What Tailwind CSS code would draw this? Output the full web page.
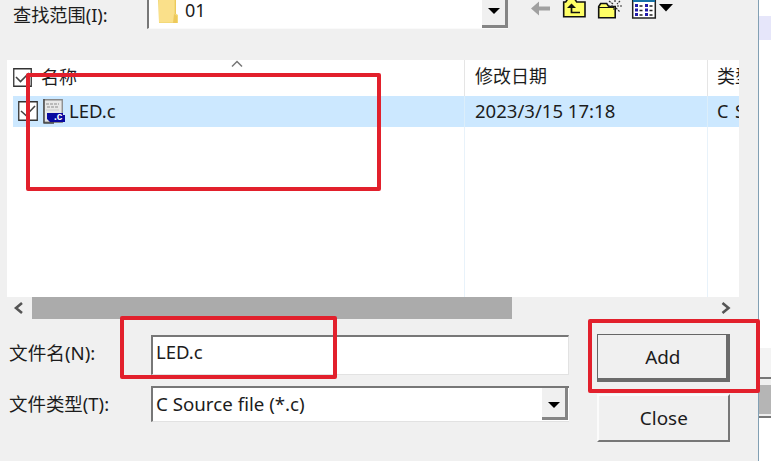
<!DOCTYPE html>
<html lang="zh-CN">
<head>
<meta charset="utf-8">
<title>Add Files</title>
<script src="https://cdn.jsdelivr.net/npm/@tailwindcss/browser@4"></script>
</head>
<body class="relative flex w-[771px] h-[461px] overflow-hidden bg-white text-[#1c1c1c] text-[18px] leading-[24px] whitespace-nowrap font-['Noto_Sans','Noto_Sans_CJK_SC',sans-serif]">
<main class="w-[759px] h-[461px] shrink-0 bg-[#f0f0f0] border-r border-[#82a0b4] flex flex-col">
  <!-- Look-in bar -->
  <header class="flex h-[60px] shrink-0 items-start">
    <div class="w-[147px] pl-[13px] pt-[3px]"><span class="inline-block origin-left scale-x-[1.01]">查找范围(I):</span></div>
    <div class="w-[361px] h-[29px] bg-white border-l-2 border-l-[#777] border-b border-b-[#fafafa] flex items-start pl-[9px]">
      <svg class="w-[22px] h-[25px] shrink-0" viewBox="0 0 22 25"><path d="M0 0h17v13l3 2v8H1z" fill="#f3d978"/><path d="M1 0h15v22H1z" fill="#fae08a"/><path d="M17 0h1v14h-1zM16 14l3 2v7h-4z" fill="#edc95b"/></svg>
      <span class="pl-[5px] -mt-[2px] w-[100px]">01</span>
      <div class="ml-auto w-[26px] h-[28px] bg-[#f0f0f0] border-r-[3px] border-b-[3px] border-[#858585] flex justify-center"><svg class="w-[12px] h-[7px] mt-[8px]" viewBox="0 0 12 7"><path d="M0 0h12L6 6z" fill="#000"/></svg></div>
    </div>
    <div class="flex pl-[22px]">
      <svg class="w-[148px] h-[22px]" viewBox="530 0 148 22">
        <path d="M531 8.500l8-7v5h11v4h-11v5z" fill="#a0a0a0"/>
        <path d="M563.700 16.800V2h2l2-3h7l2 3h8.300v14.800z" fill="#ffff66" stroke="#111" stroke-width="1.600"/>
        <path d="M580 12.500h-8.500V6" fill="none" stroke="#111" stroke-width="1.700"/><path d="M567 8l4.500-4.500L576 8z" fill="#111"/>
        <path d="M598.700 17.800V6.500l2-3h6l2 3h6.500v11.300z" fill="#ffff66" stroke="#111" stroke-width="1.600"/>
        <path d="M599 7.500h15" stroke="#111"/>
        <path d="M615 0v3M609 1l4 3M620 1l-3 3M617 6h5M616 8l4 4M608 6h5M614 8v3" stroke="#333" stroke-width="1.200" stroke-dasharray="2 1"/>
        <path d="M632.700 0h22.600v18h-22.600z" fill="#fff" stroke="#222" stroke-width="1.500"/>
        <path d="M633 0h22v2h-22z" fill="#1470a5"/>
        <g fill="#211aaa"><path d="M635 4h3v3h-3zM645 4h3v3h-3zM635 8.500h3v3h-3zM645 8.500h3v3h-3zM635 13h3v3h-3zM645 13h3v3h-3z"/></g>
        <path d="M639.500 6h3M649.500 6h3M639.500 10.500h3M649.500 10.500h3M639.500 15h3M649.500 15h3" stroke="#222" stroke-width="1.500"/>
        <path d="M659 4h14l-7 7.500z" fill="#000"/>
      </svg>
    </div>
  </header>

  <!-- File list -->
  <section class="ml-[7px] w-[732px] h-[237px] shrink-0 bg-white overflow-hidden grid grid-cols-[458px_243px_31px] grid-rows-[36px_31px_1fr]">
    <div class="relative border-r border-[#e5e5e5] flex items-center pl-[6px]">
      <svg class="w-[19px] h-[19px] mt-[-2px]" viewBox="0 0 19 19"><path d="M.75.750h17.500v17.500H.75z" fill="#fff" stroke="#333" stroke-width="1.300"/><path d="M3 9l4.500 4.500L16 5" fill="none" stroke="#444" stroke-width="1.600"/></svg>
      <span class="pl-[9px] -mt-[2px]">名称</span>
      <svg class="absolute left-[224px] top-0 w-[12px] h-[8px]" viewBox="0 0 12 8"><path d="M1 6.500l5-5 5 5" fill="none" stroke="#777" stroke-width="1.500"/></svg>
    </div>
    <div class="border-r border-[#e5e5e5] pl-[10px] pt-[4px]">修改日期</div>
    <div class="pl-[9px] pt-[4px] overflow-hidden">类型</div>
    <div class="ml-[6px] bg-[#cce8ff] border-r border-[#dceefa] flex items-center pl-[5px]">
      <svg class="w-[20px] h-[20px] -mt-[1px]" viewBox="0 0 20 20"><path d="M.75.750h18.500v18.500H.75z" fill="#fff" stroke="#333" stroke-width="1.300"/><path d="M3 10l5 4.500L17 5" fill="none" stroke="#444" stroke-width="1.600"/></svg>
      <svg class="ml-[5px] w-[22px] h-[25px] -mt-[1px]" viewBox="0 0 22 25"><path d="M.75.750h18.500v22.500H.75z" fill="#e8e8e8" stroke="#888" stroke-width="1.300"/><path d="M1 0v24h10" stroke="#444" stroke-width="1.300" fill="none"/><path d="M3 5h13M4 8h11" stroke="#aaa" stroke-width="1.500" stroke-dasharray="3 1"/><path d="M3 11h13" stroke="#ccc"/><path d="M4 14h16v2h2v7H7l-3-3z" fill="#0909a0"/><text x="11" y="21" font-size="10" font-weight="700" fill="#fff" font-family="Liberation Sans">.c</text></svg>
      <span class="pl-[4px] -mt-[1px]"><span class="inline-block origin-left scale-x-[1.030]">LED.c</span></span>
    </div>
    <div class="bg-[#cce8ff] border-r border-[#dceefa] pl-[10px] pt-[3px]"><span class="inline-block origin-left scale-x-[1.030]">2023/3/15 17:18</span></div>
    <div class="bg-[#cce8ff] pl-[9px] pt-[3px] overflow-hidden [word-spacing:2px]">C Source</div>
    <div class="border-r border-[#e8f2fa]"></div>
    <div class="border-r border-[#e8f2fa]"></div>
    <div></div>
  </section>

  <!-- Horizontal scrollbar -->
  <div class="ml-[7px] w-[732px] h-[22px] shrink-0 flex items-center">
    <svg class="ml-[6px] w-[10px] h-[12px]" viewBox="0 0 10 12"><path d="M9 1L3 6l6 5" fill="none" stroke="#555" stroke-width="2.600"/></svg>
    <div class="ml-[9px] w-[480px] h-[22px] bg-[#ababab]"></div>
    <svg class="ml-[209px] w-[10px] h-[12px]" viewBox="0 0 10 12"><path d="M1.500 1l6 5-6 5" fill="none" stroke="#555" stroke-width="2.600"/></svg>
  </div>

  <!-- Name, type and buttons -->
  <section class="flex pt-[15px]">
    <div class="w-[151px] pl-[9px] pt-[7px]">
      <div class="h-[51px]"><span class="inline-block origin-left scale-x-[1.035]">文件名(N):</span></div>
      <div><span class="inline-block origin-left scale-x-[1.025]">文件类型(T):</span></div>
    </div>
    <div class="w-[418px] pt-[1px]">
      <div class="h-[40px] bg-white border-t-2 border-l-2 border-t-[#777] border-l-[#777] border-r border-b border-r-[#e2e2e2] border-b-[#e2e2e2] pl-[3px] pt-[3px]"><span class="inline-block origin-left scale-x-[1.030]">LED.c</span></div>
      <div class="mt-[11px] h-[36px] bg-white border-t-2 border-l-2 border-t-[#777] border-l-[#777] border-b border-b-[#e2e2e2] flex pl-[3px] pt-[3px]">
        <span class="pt-px"><span class="inline-block origin-left scale-x-[1.040]">C Source file (*.c)</span></span>
        <div class="ml-auto -mt-[3px] mr-[1px] w-[26px] h-[32px] bg-[#f0f0f0] border-r-[3px] border-b-[3px] border-[#858585] flex justify-center"><svg class="w-[12px] h-[7px] mt-[14px]" viewBox="0 0 12 7"><path d="M0 0h12L6 6z" fill="#000"/></svg></div>
      </div>
    </div>
    <div class="pl-[28px] flex flex-col">
      <div class="w-[133px] h-[48px] border border-[#666] border-r-[4px] border-b-[4px] border-r-[#6b6b6b] border-b-[#6b6b6b] flex justify-center pt-[10px] pl-[2px]"><span class="inline-block scale-x-[1.050]">Add</span></div>
      <div class="mt-[12px] w-[133px] h-[48px] border-t-2 border-l-2 border-t-[#fbfbfb] border-l-[#fbfbfb] border-r-2 border-b-2 border-r-[#777] border-b-[#777] flex justify-center pt-[10px]"><span class="inline-block scale-x-[1.050]">Close</span></div>
    </div>
  </section>
</main>
<aside class="flex-1 bg-white flex flex-col pt-[16px]">
  <div class="h-[24px] bg-[#e6e6fa]"></div>
  <div class="mt-[308px] h-[29px] bg-[#f3f3f3]"></div>
  <div class="h-[2px] bg-[#777]"></div>
  <div class="h-[6px] bg-[#f0f0f0]"></div>
  <div class="h-[29px] bg-[#b5b5b5]"></div>
  <div class="h-[4px] bg-[#eee] border-b-2 border-[#777]"></div>
</aside>

<!-- Highlight annotations over the dialog -->
<div class="absolute left-[26px] top-[73px] w-[355px] h-[118px] border-4 border-[#e2202c] rounded-[2px]"></div>
<div class="absolute left-[120px] top-[316px] w-[217px] h-[63px] border-4 border-[#e2202c] rounded-[2px]"></div>
<div class="absolute left-[588px] top-[319px] w-[172px] h-[74px] border-4 border-[#e2202c] rounded-[2px]"></div>
</body>
</html>
